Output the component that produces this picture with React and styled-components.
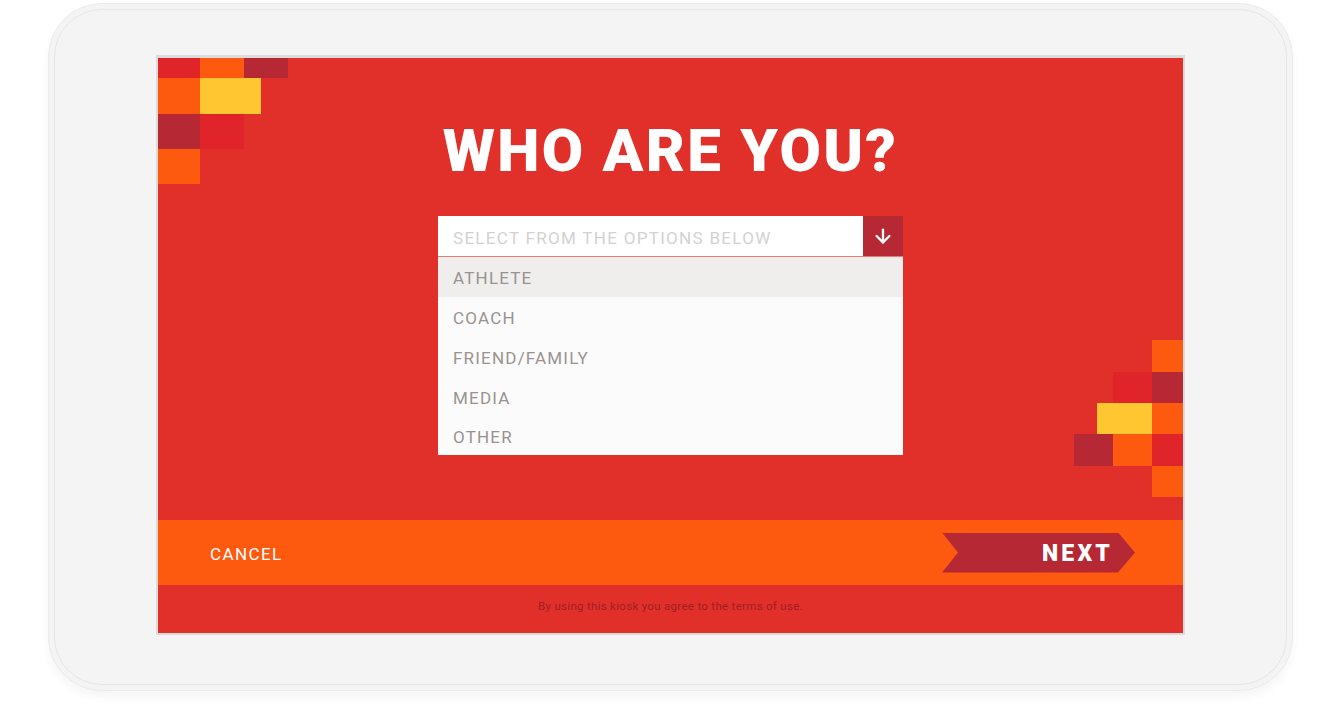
import React from 'react';
import styled, { createGlobalStyle } from 'styled-components';
import { ArrowDown } from 'lucide-react';

const palette = {
  red: '#e1302a',
  bright: '#e0242a',
  orange: '#fd5a10',
  dark: '#b52834',
  yellow: '#fec630',
};

const GlobalStyle = createGlobalStyle`
  html, body {
    margin: 0;
    padding: 0;
    background: #ffffff;
  }
  body {
    font-family: Roboto, "Liberation Sans", Arial, sans-serif;
  }
`;

const Page = styled.div`
  width: 1322px;
  height: 704px;
  box-sizing: border-box;
  padding: 3px 0 0 48px;
  background: #ffffff;
  overflow: hidden;
`;

const Tablet = styled.div`
  width: 1245px;
  height: 688px;
  box-sizing: border-box;
  padding: 5px;
  border: 1px solid #ebebeb;
  border-radius: 54px;
  background: #f4f4f4;
  box-shadow: 0 6px 10px rgba(0, 0, 0, 0.04);
`;

const Bezel = styled.div`
  height: 100%;
  box-sizing: border-box;
  border: 1px solid #e6e6e6;
  border-radius: 48px;
  display: flex;
  justify-content: center;
  padding-top: 45px;
`;

const Screen = styled.div`
  position: relative;
  width: 1029px;
  height: 580px;
  box-sizing: border-box;
  border: 2px solid #dcdcdc;
  border-top-width: 3px;
  background: ${palette.red};
  display: flex;
  flex-direction: column;
  overflow: hidden;
`;

const Main = styled.main`
  flex: 1;
  display: flex;
  flex-direction: column;
  align-items: center;
  padding-top: 63px;
`;

const Title = styled.h1`
  margin: 0 0 35px;
  font-family: Roboto, "Liberation Sans", sans-serif;
  font-weight: 900;
  font-size: 60px;
  line-height: 1;
  letter-spacing: 2.3px;
  color: #ffffff;
  text-transform: uppercase;
`;

const Dropdown = styled.div`
  width: 465px;
  display: flex;
  flex-direction: column;
`;

const Field = styled.div`
  display: flex;
  height: 40px;
  border-bottom: 1px solid #f07a72;
`;

const Placeholder = styled.div`
  flex: 1;
  display: flex;
  align-items: center;
  padding: 3px 0 0 15px;
  background: #ffffff;
  color: #d2d2d2;
  font-size: 17px;
  letter-spacing: 1.3px;
`;

const Toggle = styled.button`
  width: 40px;
  border: 0;
  padding: 0;
  background: ${palette.dark};
  color: #ffffff;
  display: flex;
  align-items: center;
  justify-content: center;
`;

const Options = styled.ul`
  list-style: none;
  margin: 0;
  padding: 0;
  background: #fbfbfb;
`;

const Option = styled.li`
  height: 40px;
  display: flex;
  align-items: center;
  padding: 2px 0 0 15px;
  box-sizing: border-box;
  background: ${p => (p.$active ? '#efeeec' : 'transparent')};
  color: #9a928f;
  font-size: 17px;
  letter-spacing: 1.2px;

  &:last-child {
    height: 38px;
  }
`;

const Footer = styled.div`
  height: 65px;
  background: ${palette.orange};
  display: flex;
  align-items: center;
  justify-content: space-between;
  padding: 0 48px 0 52px;
`;

const Cancel = styled.button`
  border: 0;
  padding: 2px 0 0;
  background: none;
  color: #ffffff;
  font-family: Roboto, "Liberation Sans", sans-serif;
  font-size: 17px;
  letter-spacing: 1.4px;
`;

const Next = styled.button`
  width: 193px;
  height: 40px;
  border: 0;
  padding: 2px 22px 0 0;
  background: ${palette.dark};
  clip-path: polygon(0 0, calc(100% - 17px) 0, 100% 50%, calc(100% - 17px) 100%, 0 100%, 16px 50%);
  color: #ffffff;
  font-family: Roboto, "Liberation Sans", sans-serif;
  font-weight: 900;
  font-size: 23px;
  letter-spacing: 3.2px;
  text-align: right;
`;

const Terms = styled.p`
  margin: 0;
  height: 48px;
  box-sizing: border-box;
  padding-bottom: 6px;
  display: flex;
  align-items: center;
  justify-content: center;
  color: #a21d27;
  font-size: 11.5px;
  letter-spacing: 0.3px;
`;

const Mosaic = styled.svg`
  position: absolute;
  top: ${p => p.$top}px;
  ${p => (p.$right ? 'right: 0;' : 'left: 0;')}
`;

// [x, y, w, h, colour]
const topLeft = [
  [0, 0, 42, 20, palette.bright],
  [42, 0, 44, 20, palette.orange],
  [86, 0, 44, 20, palette.dark],
  [0, 20, 42, 36, palette.orange],
  [42, 20, 61, 36, palette.yellow],
  [0, 56, 42, 35, palette.dark],
  [42, 56, 44, 35, palette.bright],
  [0, 91, 42, 35, palette.orange],
];

const bottomRight = [
  [78, 0, 31, 32, palette.orange],
  [39, 32, 39, 31, palette.bright],
  [78, 32, 31, 31, palette.dark],
  [23, 63, 55, 31, palette.yellow],
  [78, 63, 31, 31, palette.orange],
  [0, 94, 39, 32, palette.dark],
  [39, 94, 39, 32, palette.orange],
  [78, 94, 31, 32, palette.bright],
  [78, 126, 31, 31, palette.orange],
];

const Tiles = ({ tiles, width, height, top, right }) => (
  <Mosaic width={width} height={height} viewBox={`0 0 ${width} ${height}`} $top={top} $right={right}>
    {tiles.map(([x, y, w, h, fill], i) => (
      <rect key={i} x={x} y={y} width={w} height={h} fill={fill} />
    ))}
  </Mosaic>
);

const roles = ['Athlete', 'Coach', 'Friend/Family', 'Media', 'Other'];

export default function App() {
  return (
    <>
      <GlobalStyle />
      <Page>
        <Tablet>
          <Bezel>
            <Screen>
              <Tiles tiles={topLeft} width={130} height={126} top={0} />
              <Tiles tiles={bottomRight} width={109} height={157} top={282} right />
              <Main>
                <Title>Who are you?</Title>
                <Dropdown>
                  <Field>
                    <Placeholder>SELECT FROM THE OPTIONS BELOW</Placeholder>
                    <Toggle>
                      <ArrowDown size={22} strokeWidth={2.5} />
                    </Toggle>
                  </Field>
                  <Options>
                    {roles.map((r, i) => (
                      <Option key={r} $active={i === 0}>
                        {r.toUpperCase()}
                      </Option>
                    ))}
                  </Options>
                </Dropdown>
              </Main>
              <Footer>
                <Cancel>CANCEL</Cancel>
                <Next>NEXT</Next>
              </Footer>
              <Terms>By using this kiosk you agree to the terms of use.</Terms>
            </Screen>
          </Bezel>
        </Tablet>
      </Page>
    </>
  );
}
